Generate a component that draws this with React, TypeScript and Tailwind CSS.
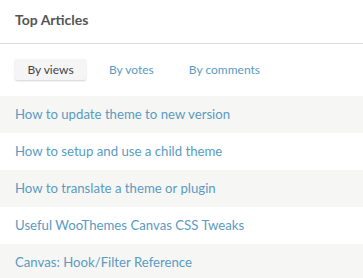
import React from 'react';

const articles = [
  'How to update theme to new version',
  'How to setup and use a child theme',
  'How to translate a theme or plugin',
  'Useful WooThemes Canvas CSS Tweaks',
  'Canvas: Hook/Filter Reference',
];

export default function App() {
  return (
    <div className="h-[278px] w-[363px] overflow-hidden bg-white font-['Lato',sans-serif]">
      <div className="h-[44px] border-b border-[#dcdcdc] px-[15px] pt-[11px]">
        <h2 className="text-[14px] font-bold leading-[18px] text-[#555]">Top Articles</h2>
      </div>
      <div className="flex h-[52px] items-start whitespace-nowrap px-[15px] pt-[15px]">
        <button className="h-[21px] w-[71px] shrink-0 rounded-[2px] bg-[#f5f5f5] text-[12px] leading-[21px] text-[#444] shadow-[0_1px_2px_rgba(0,0,0,0.18)]">
          By views
        </button>
        <a className="ml-[23px] text-[12px] leading-[21px] text-[#5a9bc3]">By votes</a>
        <a className="ml-[35px] text-[12px] leading-[21px] text-[#5a9bc3]">By comments</a>
      </div>
      <ul>
        {articles.map((a, i) => (
          <li
            key={a}
            className={`h-[37px] px-[15px] text-[13.2px] leading-[37px] text-[#5a9bc3] ${
              i % 2 === 0 ? 'bg-[#f6f6f4]' : 'bg-white'
            }`}
          >
            {a}
          </li>
        ))}
      </ul>
    </div>
  );
}
